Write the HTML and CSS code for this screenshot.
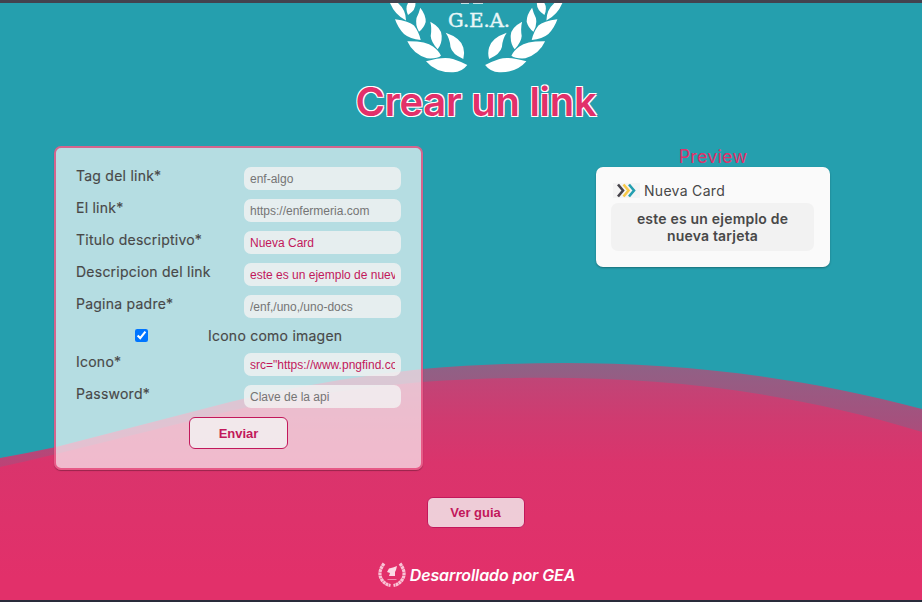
FILE: index.html
```html
<!DOCTYPE html>
<html lang="es">
<head>
<meta charset="utf-8">
<title>Crear un link</title>
<link rel="stylesheet" href="styles.css">
</head>
<body>
<svg class="waves" viewBox="0 0 922 602" aria-hidden="true">
  <defs>
    <linearGradient id="back" gradientUnits="userSpaceOnUse" x1="0" y1="363" x2="0" y2="467">
      <stop offset="0" stop-color="#8f6286"/><stop offset=".5" stop-color="#a3527e"/><stop offset="1" stop-color="#bd4376"/>
    </linearGradient>
    <linearGradient id="front" gradientUnits="userSpaceOnUse" x1="0" y1="378" x2="0" y2="578">
      <stop offset="0" stop-color="#c04577"/><stop offset=".2" stop-color="#cf3b70"/><stop offset=".42" stop-color="#da346c"/><stop offset="1" stop-color="#e2306a"/>
    </linearGradient>
  </defs>
  <path fill="url(#back)" d="M0 458Q28 453 56 447L230 402Q326 379 422 369C570 357 735 359 922 409V602H0Z"/>
  <path fill="url(#front)" d="M0 467Q28 461 56 454L230 411Q326 390 422 382C590 371 750 379 922 432V602H0Z"/>
</svg>
<div class="page">
  <header class="header">
    <svg class="logo" viewBox="0 0 180 70">
      <defs>
        <g id="branch">
          <path d="M2 0H10Q18 7 18 17.500Q7 12 2 0ZM20 0H27.500Q28 7 20 12Q17 5 20 0ZM7 16.300Q21 18 26 22.500Q31 29 32.700 37Q22 36 16 31Q10 25 7 16.300ZM32.300 4.700Q38 12 37.700 19Q36 25 31 28.700Q27 22 28.500 15Q31 10 32.300 4.700ZM19.300 38.300Q38 38 45 43.500Q51 48 53 52.700Q49 56 39 55.300Q25 51 19.300 38.300ZM42.300 18.700Q54 25 53.700 33Q54 41 49.700 46.300Q43 39 42.700 33Q44 25 42.300 18.700ZM57.700 29.700Q73 35 75.300 44.500Q77 50 75.300 56Q64 51 62.500 44Q62 36 57.700 29.700ZM38 58.300Q56 53 65 56Q74 59 79.300 62Q74 69 65.300 69.300Q48 70 38 58.300Z"/>
        </g>
      </defs>
      <use href="#branch"/>
      <use href="#branch" transform="translate(176.4 0) scale(-1 1)"/>
      <path d="M73 0H81V1H73ZM85 0H95V1H85Z" opacity=".7"/>
      <text x="60" y="23.500" textLength="62" lengthAdjust="spacingAndGlyphs">G.E.A.</text>
    </svg>
    <h1>Crear un link</h1>
  </header>
  <main class="main">
    <form class="form">
      <label class="field"><span>Tag del link*</span><input type="text" placeholder="enf-algo"></label>
      <label class="field"><span>El link*</span><input type="text" placeholder="https://enfermeria.com"></label>
      <label class="field"><span>Titulo descriptivo*</span><input type="text" value="Nueva Card"></label>
      <label class="field"><span>Descripcion del link</span><input type="text" value="este es un ejemplo de nueva tarjeta"></label>
      <label class="field"><span>Pagina padre*</span><input type="text" placeholder="/enf,/uno,/uno-docs"></label>
      <label class="check"><input type="checkbox" checked><span>Icono como imagen</span></label>
      <label class="field"><span>Icono*</span><input type="text" value="src=&quot;https://www.pngfind.com/pngs&quot;"></label>
      <label class="field"><span>Password*</span><input type="text" placeholder="Clave de la api"></label>
      <button class="button" type="button">Enviar</button>
    </form>
    <section class="preview">
      <h2>Preview</h2>
      <article class="card">
        <div class="card-title">
          <svg class="chevrons" viewBox="0 0 27 15" fill="none" stroke-width="2.600">
            <path stroke="#46434a" d="M5 1.500L10 7.500L5 13.500"/>
            <path stroke="#f7c948" d="M10.500 1.500L15.500 7.500L10.500 13.500"/>
            <path stroke="#249fb0" d="M16 1.500L21 7.500L16 13.500"/>
          </svg>
          <span>Nueva Card</span>
        </div>
        <p>este es un ejemplo de nueva tarjeta</p>
      </article>
    </section>
  </main>
  <button class="button guide" type="button">Ver guia</button>
  <footer class="footer">
    <svg class="mini-logo" viewBox="0 0 28 26">
      <g fill="none" stroke="#f9c3d5" stroke-width="3.200" stroke-dasharray="2.800 .5">
        <path d="M6 1.500Q-1 11 4 18Q7 22.500 12.500 23.500"/>
        <path d="M22 1.500Q29 11 24 18Q21 22.500 15.500 23.500"/>
      </g>
      <path fill="#fbdce6" d="M19 4L18 8L17 10V14H11L12 11L9 10L11 6.500L15 5.500Z"/>
      <path stroke="#f08aad" d="M9.500 17.500H18.500"/>
    </svg>
    <span>Desarrollado por GEA</span>
  </footer>
</div>
</body>
</html>
```
FILE: styles.css
```css
* { box-sizing: border-box; }
body {
  margin: 0;
  height: 602px;
  overflow: hidden;
  background: #259fae;
  color: #484848;
  font-family: Inter, sans-serif;
}
.waves { position: absolute; inset: 0; width: 922px; height: 602px; }
.page {
  position: relative;
  height: 602px;
  border-top: 3px solid #43434f;
  border-bottom: 2px solid #292b3a;
  display: flex;
  flex-direction: column;
  align-items: center;
}
.header {
  display: flex;
  flex-direction: column;
  align-items: center;
  width: 100%;
  padding-left: 30px;
}
.logo { width: 180px; height: 70px; fill: #fff; margin-left: 3px; }
.logo text { font: 18px "DejaVu Serif", serif; fill: #eaf7f8; stroke: #eaf7f8; stroke-width: .4px; }
h1 {
  margin: 5px 0 0;
  height: 48px;
  line-height: 48px;
  font-size: 40px;
  font-weight: 600;
  letter-spacing: -.3px;
  color: #e2306a;
  text-shadow: -1px -1px #fff, 1px -1px #fff, -1px 1px #fff, 1px 1px #fff;
}
.main {
  width: 100%;
  display: flex;
  align-items: flex-start;
  gap: 173px;
  padding: 20px 0 0 54px;
}
.form {
  width: 369px;
  height: 324px;
  padding: 18px 20px 0;
  display: flex;
  flex-direction: column;
  border: 2px solid rgba(226, 48, 106, .7);
  border-radius: 7px;
  background: rgba(250, 250, 250, .68);
  box-shadow: 0 1px 1px rgba(0, 0, 0, .3);
}
.field {
  height: 32px;
  display: flex;
  justify-content: space-between;
  align-items: flex-start;
}
.field span, .check span { font-size: 14px; line-height: 20px; letter-spacing: .24px; -webkit-text-stroke: .15px; }
.field input {
  width: 157px;
  height: 23px;
  margin-top: 1px;
  padding: 1px 6px;
  border: 0;
  border-radius: 7px;
  background: rgba(242, 242, 242, .8);
  color: #c2185b;
  font: 12px "Liberation Sans", sans-serif;
}
.field input::placeholder { color: #757575; }
.check { height: 26px; display: flex; align-items: flex-start; }
.check input { width: 13px; height: 13px; margin: 3px 60px 0 59px; }
.button {
  width: 99px;
  height: 32px;
  padding: 0;
  border: 1px solid #c2185b;
  border-radius: 6px;
  background: rgba(242, 242, 242, .8);
  color: #c2185b;
  font: bold 13px "Liberation Sans", sans-serif;
}
.form .button { align-self: center; margin-top: 1px; }
.preview { width: 234px; }
h2 {
  margin: 0;
  height: 21px;
  line-height: 22px;
  text-align: center;
  font-size: 18px;
  font-weight: 400;
  letter-spacing: .15px;
  color: #e2306a;
}
.card {
  height: 100px;
  padding: 15px 16px 0 15px;
  border-radius: 7px;
  background: #fafafa;
  box-shadow: 0 1px 2px rgba(0, 0, 0, .3);
}
.card-title {
  height: 21px;
  padding: 0 0 4px 2px;
  display: flex;
  align-items: center;
  gap: 4px;
  font-size: 14px;
  letter-spacing: .3px;
}
.chevrons { width: 27px; height: 15px; background: #f4f4f4; }
.card p {
  margin: 0;
  height: 48px;
  padding: 7px 18px;
  border-radius: 7px;
  background: #f2f2f2;
  text-align: center;
  font-size: 14px;
  line-height: 17px;
  font-weight: 600;
  letter-spacing: .2px;
}
.guide { width: 98px; height: 31px; margin: 27px 0 0 29px; }
.footer {
  display: flex;
  align-items: center;
  gap: 4px;
  height: 26px;
  margin: 34px 0 0 31px;
  color: #fff;
  font-size: 16px;
  font-style: italic;
  font-weight: 600;
  letter-spacing: -.1px;
}
.mini-logo { width: 28px; height: 26px; }
```
